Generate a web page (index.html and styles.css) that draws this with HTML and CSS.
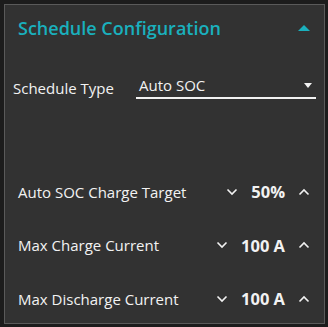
FILE: index.html
```html
<!DOCTYPE html>
<html lang="en">
<head>
    <meta charset="UTF-8">
    <title>Schedule Configuration</title>
    <link rel="stylesheet" href="styles.css">
</head>
<body>
<div class="panel">
    <div class="panel-head">
        <span class="panel-title">Schedule Configuration</span>
        <span class="collapse-caret"></span>
    </div>
    <div class="type-row">
        <span class="type-label">Schedule Type</span>
        <div class="select">
            <span>Auto SOC</span>
            <span class="select-caret"></span>
        </div>
    </div>
    <div class="fields">
        <div class="field">
            <span class="field-label">Auto SOC Charge Target</span>
            <div class="stepper">
                <svg class="chev" viewBox="0 0 12 8"><path d="M1.5 1.5 L6 6 L10.5 1.5"/></svg>
                <span class="value">50%</span>
                <svg class="chev" viewBox="0 0 12 8"><path d="M1.5 6.5 L6 2 L10.5 6.5"/></svg>
            </div>
        </div>
        <div class="field">
            <span class="field-label">Max Charge Current</span>
            <div class="stepper">
                <svg class="chev" viewBox="0 0 12 8"><path d="M1.5 1.5 L6 6 L10.5 1.5"/></svg>
                <span class="value">100 A</span>
                <svg class="chev" viewBox="0 0 12 8"><path d="M1.5 6.5 L6 2 L10.5 6.5"/></svg>
            </div>
        </div>
        <div class="field">
            <span class="field-label">Max Discharge Current</span>
            <div class="stepper">
                <svg class="chev" viewBox="0 0 12 8"><path d="M1.5 1.5 L6 6 L10.5 1.5"/></svg>
                <span class="value">100 A</span>
                <svg class="chev" viewBox="0 0 12 8"><path d="M1.5 6.5 L6 2 L10.5 6.5"/></svg>
            </div>
        </div>
    </div>
</div>
</body>
</html>
```

FILE: styles.css
```css
html, body{
    margin: 0;
    background-color: #1c1c1c;
}
body{
    padding: 4px;
    font-family: "Open Sans", "Noto Sans", sans-serif;
    color: #f2f2f2;
}

.panel{
    box-sizing: border-box;
    width: 321px;
    height: 320px;
    border: 1px solid #5a5a5a;
    background-color: #323232;
}

.panel-head{
    display: flex;
    align-items: center;
    justify-content: space-between;
    height: 45px;
    padding: 0 14px 0 13px;
}
.panel-title{
    color: #1ab0bd;
    font-size: 18px;
    font-weight: 600;
}
.collapse-caret{
    width: 0;
    height: 0;
    border-left: 6px solid transparent;
    border-right: 6px solid transparent;
    border-bottom: 6px solid #1ab0bd;
}

.type-row{
    display: flex;
    align-items: center;
    padding: 25px 8px 0 8px;
}
.type-label{
    font-size: 15px;
    width: 123px;
    padding-top: 2px;
}
.select{
    flex: 1;
    display: flex;
    align-items: center;
    justify-content: space-between;
    font-size: 15px;
    line-height: 20px;
    padding: 0 4px 2px 3px;
    border-bottom: 2px solid #f2f2f2;
}
.select-caret{
    width: 0;
    height: 0;
    border-left: 4px solid transparent;
    border-right: 4px solid transparent;
    border-top: 5px solid #f2f2f2;
}

.fields{
    padding: 66px 14px 0 13px;
}
.field{
    display: flex;
    align-items: center;
    justify-content: space-between;
    height: 53.5px;
}
.field-label{
    font-size: 15px;
}
.stepper{
    display: flex;
    align-items: center;
    gap: 13px;
}
.value{
    font-size: 16.5px;
    font-weight: 700;
}
.chev{
    width: 12px;
    height: 8px;
}
.chev path{
    fill: none;
    stroke: #f2f2f2;
    stroke-width: 1.6;
}
```
